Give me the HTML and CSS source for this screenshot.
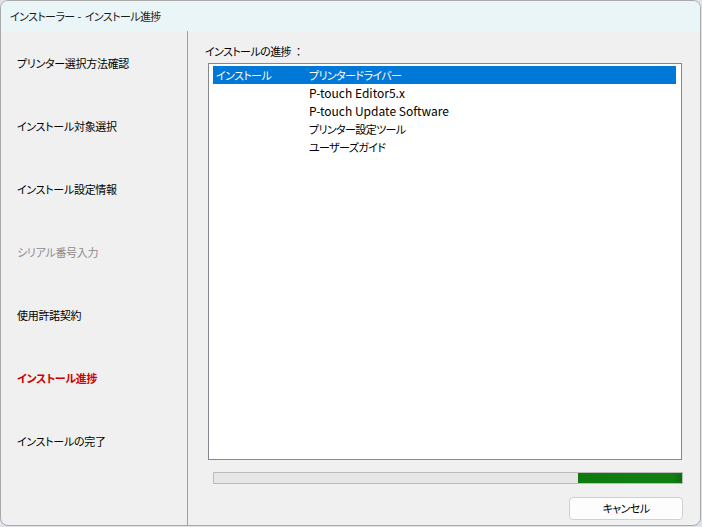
FILE: index.html
```html
<!DOCTYPE html>
<html lang="ja">
<head>
<meta charset="utf-8">
<title>インストーラー - インストール進捗</title>
<link rel="stylesheet" href="styles.css">
</head>
<body>
<div class="window">
  <div class="titlebar ja">インストーラー<span class="sep"> - </span>インストール進捗</div>
  <div class="main">
    <nav class="sidebar">
      <div class="step ja">プリンター選択方法確認</div>
      <div class="step ja">インストール対象選択</div>
      <div class="step ja">インストール設定情報</div>
      <div class="step ja disabled">シリアル番号入力</div>
      <div class="step ja">使用許諾契約</div>
      <div class="step ja current">インストール進捗</div>
      <div class="step ja">インストールの完了</div>
    </nav>
    <section class="content">
      <div class="label"><span class="ja">インストールの進捗</span><span class="colon">：</span></div>
      <div class="listbox">
        <div class="row selected"><span class="c1 ja">インストール</span><span class="c2 ja">プリンタードライバー</span></div>
        <div class="row"><span class="c1"></span><span class="c2">P-touch Editor5.x</span></div>
        <div class="row"><span class="c1"></span><span class="c2">P-touch Update Software</span></div>
        <div class="row"><span class="c1"></span><span class="c2 ja">プリンター設定ツール</span></div>
        <div class="row"><span class="c1"></span><span class="c2 ja">ユーザーズガイド</span></div>
      </div>
      <div class="progress"><div class="progress-fill"></div></div>
      <div class="actions"><button class="btn ja">キャンセル</button></div>
    </section>
  </div>
</div>
</body>
</html>
```

FILE: styles.css
```css
* { box-sizing: border-box; }
html, body { margin: 0; padding: 0; }
body {
  background: #dfe3e8;
  width: 702px;
  height: 527px;
  font-family: "Noto Sans CJK JP", "Noto Sans", sans-serif;
  font-size: 12px;
  color: #000;
  overflow: hidden;
}
.ja {
  font-size: 11px;
  font-feature-settings: "palt";
  letter-spacing: -0.6px;
}
.window {
  width: 701px;
  height: 526px;
  border: 1px solid #a9a9a9;
  border-radius: 8px;
  background: #f0f0f0;
  overflow: hidden;
  display: flex;
  flex-direction: column;
}
.titlebar {
  height: 30px;
  flex: none;
  background: #eaf5f7;
  padding-left: 9px;
  line-height: 30px;
  color: #1a1a1a;
}
.sep { letter-spacing: 0.5px; }
.main {
  flex: 1;
  display: flex;
  min-height: 0;
}
.sidebar {
  width: 187px;
  flex: none;
  border-right: 1px solid #a0a0a0;
  display: flex;
  flex-direction: column;
}
.step {
  height: 63px;
  line-height: 64px;
  padding-left: 16px;
  white-space: nowrap;
  letter-spacing: -0.3px;
}
.step.disabled { color: #8c8c8c; }
.step.current { color: #cc0000; font-weight: bold; }
.content {
  flex: 1;
  display: flex;
  flex-direction: column;
  padding: 12px 0 0 17px;
}
.label {
  height: 16px;
  line-height: 16px;
  margin-bottom: 4px;
  font-size: 11px;
}
.colon { margin-left: 2px; }
.listbox {
  margin-left: 3px;
  width: 474px;
  height: 397px;
  border: 1px solid #828790;
  background: #fff;
  padding: 2px 5px 2px 4px;
}
.row {
  display: flex;
  height: 18px;
  line-height: 18px;
  white-space: nowrap;
}
.row.selected { background: #0078d7; color: #fff; }
.c1 { width: 96px; padding-left: 3px; flex: none; }
.c2 { flex: 1; }
.progress {
  margin: 12px 0 0 8px;
  width: 470px;
  height: 12px;
  border: 1px solid #bcbcbc;
  background: #e6e6e6;
  display: flex;
  justify-content: flex-end;
}
.progress-fill {
  width: 104px;
  height: 100%;
  background: linear-gradient(90deg, #0e7a0e, #118011 90%, #0c700c);
}
.actions {
  display: flex;
  justify-content: flex-end;
  width: 478px;
  margin-top: 13px;
}
.btn {
  width: 114px;
  height: 23px;
  border: 1px solid #d0d0d0;
  border-radius: 4px;
  background: #fdfdfd;
  font-family: inherit;
  color: #000;
  padding: 0;
  line-height: 21px;
}
```
